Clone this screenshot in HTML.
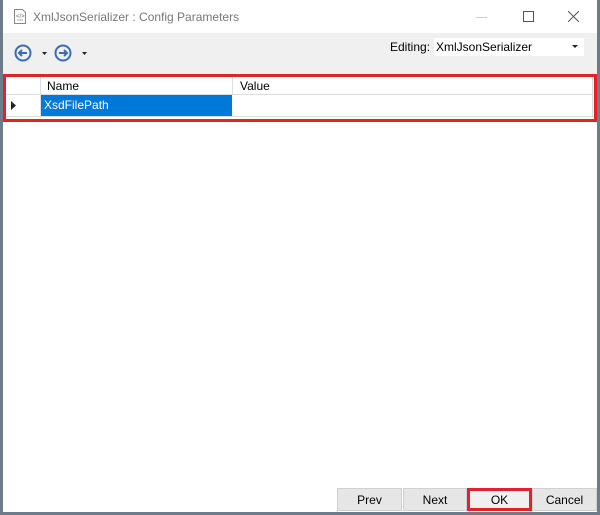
<!DOCTYPE html><html><head><style>
body{margin:0;width:600px;height:515px;background:#6f7b89;position:relative;overflow:hidden;font-family:"Liberation Sans",sans-serif;font-size:12px;color:#000}
.win{position:absolute;left:3px;top:0;width:594px;height:512px;background:#fff}
.title{position:absolute;left:0;top:0;width:594px;height:33px;background:#fff}
.tool{position:absolute;left:0;top:33px;width:594px;height:41px;background:#f0f0f0}
.abs{position:absolute}
.btn{position:absolute;top:488px;height:23px;background:#e6e6e6;border:1px solid #d0d0d0;box-sizing:border-box;text-align:center;line-height:22px;font-size:12px}
</style></head><body><div class="win">
<div class="title">
<svg class="abs" style="left:10px;top:8px" width="14" height="17"><path d="M1.5 1.5h8l3 3v11h-11z" fill="#fff" stroke="#888"/><path d="M4 12h6" stroke="#aaa"/><text x="3" y="10" font-size="6" fill="#666">&lt;/&gt;</text></svg>
<div class="abs" style="left:30px;top:10px;font-size:12px;color:#777">XmlJsonSerializer : Config Parameters</div>
<div class="abs" style="left:473px;top:17px;width:11px;height:1px;background:#ccc"></div>
<div class="abs" style="left:520px;top:11px;width:9px;height:9px;border:1px solid #555"></div>
<svg class="abs" style="left:565px;top:11px" width="11" height="11"><path d="M0 0L11 11M11 0L0 11" stroke="#555"/></svg>
</div>
<div class="tool">
<svg class="abs" style="left:10px;top:10px" width="80" height="20"><circle cx="10" cy="10" r="7.5" fill="none" stroke="#3b6db5" stroke-width="2"/><path d="M14 10H6M9 7L6 10L9 13" fill="none" stroke="#3b6db5" stroke-width="2"/><path d="M29 9h5l-2.5 3z" fill="#222"/><circle cx="50" cy="10" r="7.5" fill="none" stroke="#3b6db5" stroke-width="2"/><path d="M46 10H54M51 7L54 10L51 13" fill="none" stroke="#3b6db5" stroke-width="2"/><path d="M69 9h5l-2.5 3z" fill="#222"/></svg>
<div class="abs" style="left:387px;top:7px">Editing:</div>
<div class="abs" style="left:431px;top:5px;width:150px;height:18px;background:#fff"></div>
<div class="abs" style="left:433px;top:7px">XmlJsonSerializer</div>
<svg class="abs" style="left:569px;top:12px" width="6" height="4"><path d="M0 0h6l-3 3z" fill="#222"/></svg>
</div>
<div class="abs" style="left:0;top:74px;width:594px;height:48px;border:3px solid #e4202a;box-sizing:border-box"></div>
<div class="abs" style="left:3px;top:77px;width:588px;height:42px;background:#fff">
<div class="abs" style="left:0;top:0;width:586px;height:17px;border-bottom:1px solid #ddd;border-right:1px solid #ddd"></div>
<div class="abs" style="left:34px;top:0;width:1px;height:41px;background:#ddd"></div>
<div class="abs" style="left:226px;top:0;width:1px;height:18px;background:#ddd"></div>
<div class="abs" style="left:41px;top:2px">Name</div>
<div class="abs" style="left:234px;top:2px">Value</div>
<div class="abs" style="left:35px;top:18px;width:191px;height:21px;background:#0078d7;color:#fff;line-height:21px;padding-left:3px;box-sizing:border-box">XsdFilePath</div>
<div class="abs" style="left:0;top:39px;width:587px;height:1px;background:#ddd"></div>
<div class="abs" style="left:586px;top:18px;width:1px;height:22px;background:#ddd"></div>
<svg class="abs" style="left:5px;top:24px" width="5" height="9"><path d="M0 0v9l5-4.5z" fill="#222"/></svg>
</div>
<div class="btn" style="left:334px;width:65px">Prev</div>
<div class="btn" style="left:400px;width:64px">Next</div>
<div class="btn" style="left:464px;width:65px;border:3px solid #e4202a;background:#f0f0f0;line-height:18px">OK</div>
<div class="btn" style="left:529px;width:65px">Cancel</div>
</div></body></html>
